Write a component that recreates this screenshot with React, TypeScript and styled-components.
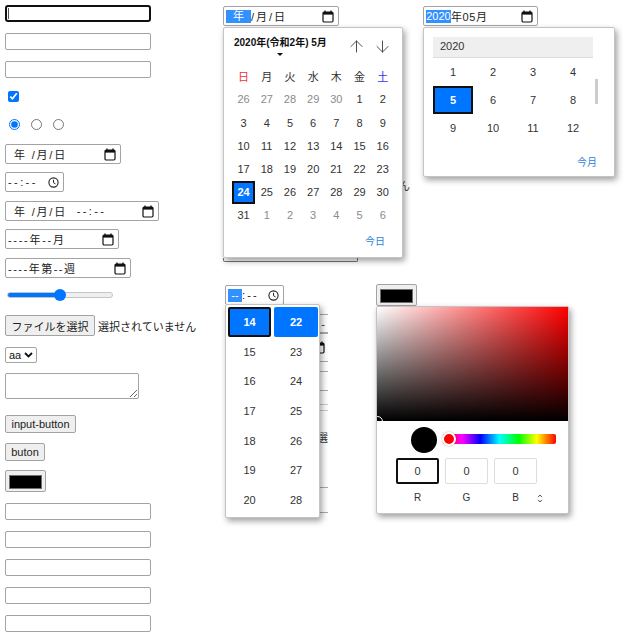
import React from "react";
import styled, { createGlobalStyle } from "styled-components";
import { ArrowUp, ArrowDown } from "lucide-react";

const FONT = `"Liberation Sans", "Noto Sans CJK JP", Arial, sans-serif`;
const BORDER = "#a3a3a3";
const BLUE = "#0075ff";
const INK = "#101010";

const Global = createGlobalStyle`
  html, body { margin: 0; padding: 0; background: #fff; overflow: hidden; }
  body { font-family: ${FONT}; font-size: 11px; color: #222; }
  * { box-sizing: border-box; }
`;

const Page = styled.div`
  display: flex;
  width: 628px;
  height: 640px;
  overflow: hidden;
`;

const FormColumn = styled.div`
  width: 223px;
  flex: none;
  padding: 5px 0 0 5px;
  display: flex;
  flex-direction: column;
  align-items: flex-start;
`;

const Spaced = styled.div<{ $top?: number; $left?: number }>`
  margin-top: ${(p) => p.$top ?? 0}px;
  margin-left: ${(p) => p.$left ?? 0}px;
`;

const TextInput = styled.input.attrs({ type: "text" })<{ $top?: number }>`
  display: block;
  flex: none;
  width: 146px;
  height: 17px;
  margin: ${(p) => p.$top ?? 0}px 0 0;
  padding: 0 2px;
  border: 1px solid ${BORDER};
  border-radius: 2px;
  background: #fff;
  font: 11px ${FONT};
  outline: none;
`;

const FocusWrap = styled.div`
  position: relative;
  width: 146px;
  height: 17px;
  flex: none;
  border: 2px solid ${INK};
  border-radius: 3px;
  &::after {
    content: "";
    position: absolute;
    left: 1px;
    top: 1px;
    bottom: 1px;
    width: 1px;
    background: #555;
  }
`;

const Checkbox = styled.input.attrs({ type: "checkbox" })`
  display: block;
  width: 11px;
  height: 11px;
  margin: 0;
  accent-color: ${BLUE};
`;

const RadioRow = styled.div`
  display: flex;
  gap: 11px;
  margin: 17px 0 0 4px;
`;

const Radio = styled.input.attrs({ type: "radio" })`
  display: block;
  width: 11px;
  height: 11px;
  margin: 0;
  accent-color: ${BLUE};
`;

const PickerField = styled.div<{ $width: number; $top?: number }>`
  flex: none;
  display: flex;
  align-items: center;
  justify-content: space-between;
  width: ${(p) => p.$width}px;
  height: 20px;
  margin-top: ${(p) => p.$top ?? 0}px;
  padding: 0 4px 0 2px;
  border: 1px solid ${BORDER};
  border-radius: 2px;
  background: #fff;
  font-size: 11px;
  color: #222;
  white-space: nowrap;
`;

const FieldText = styled.span<{ $indent?: number; $track?: number }>`
  display: inline-flex;
  align-items: center;
  white-space: pre;
  padding-left: ${(p) => p.$indent ?? 0}px;
  letter-spacing: ${(p) => p.$track ?? 0}px;
`;

const Selected = styled.span<{ $width: number }>`
  display: inline-block;
  width: ${(p) => p.$width}px;
  height: 13px;
  line-height: 13px;
  text-align: center;
  letter-spacing: 0;
  background: #3390ff;
  color: #fff;
`;

const RangeInput = styled.input.attrs({ type: "range", min: 0, max: 100, defaultValue: 50 })`
  display: block;
  width: 106px;
  height: 12px;
  margin: 11px 0 0 2px;
  padding: 0;
  appearance: none;
  background: transparent;
  &::-webkit-slider-runnable-track {
    height: 6px;
    border-radius: 3px;
    border: 1px solid #c4c4c4;
    background: linear-gradient(to right, ${BLUE} 50%, #efefef 50%);
  }
  &::-webkit-slider-thumb {
    appearance: none;
    width: 12px;
    height: 12px;
    margin-top: -4px;
    border-radius: 50%;
    background: ${BLUE};
    border: none;
  }
`;

const FileRow = styled.div`
  display: flex;
  align-items: center;
  gap: 3px;
  margin-top: 14px;
  font-size: 11px;
  white-space: nowrap;
`;

const Button = styled.button<{ $width: number; $height?: number; $top?: number }>`
  display: block;
  flex: none;
  width: ${(p) => p.$width}px;
  height: ${(p) => p.$height ?? 18}px;
  margin: ${(p) => p.$top ?? 0}px 0 0;
  padding: 0;
  border: 1px solid ${BORDER};
  border-radius: 2px;
  background: #efefef;
  font: 11px ${FONT};
  color: #222;
  white-space: nowrap;
`;

const chevron = encodeURIComponent(
  `<svg xmlns="http://www.w3.org/2000/svg" width="9" height="6" viewBox="0 0 9 6"><path d="M1 1l3.5 3.5L8 1" fill="none" stroke="#111" stroke-width="1.8"/></svg>`
);

const Select = styled.select`
  display: block;
  width: 32px;
  height: 16px;
  margin-top: 11px;
  padding: 0 0 0 3px;
  appearance: none;
  font: 11px ${FONT};
  border: 1px solid ${BORDER};
  border-radius: 2px;
  background: #fff url("data:image/svg+xml,${chevron}") no-repeat right 3px center;
  color: #111;
`;

const TextArea = styled.textarea`
  display: block;
  width: 134px;
  height: 26px;
  margin: 10px 0 0;
  padding: 2px;
  border: 1px solid ${BORDER};
  border-radius: 2px;
  font: 11px ${FONT};
`;

const ColorSwatch = styled.button<{ $top?: number }>`
  display: block;
  flex: none;
  width: 41px;
  height: 22px;
  margin: ${(p) => p.$top ?? 0}px 0 0;
  padding: 4px 3px;
  border: 1px solid ${BORDER};
  border-radius: 2px;
  background: #efefef;
  &::before {
    content: "";
    display: block;
    height: 100%;
    background: #000;
    border: 1px solid #6f6f6f;
  }
`;

const Workspace = styled.div`
  flex: 1;
  min-width: 0;
  display: flex;
  flex-direction: column;
`;

const TopDemos = styled.div`
  display: flex;
  height: 262px;
  padding-top: 6px;
`;

const BottomDemos = styled.div`
  display: flex;
  margin: 22px 0 0 2px;
`;

const DateDemo = styled.div`
  position: relative;
  width: 200px;
  flex: none;
  display: flex;
  flex-direction: column;
`;

const StrayGlyph = styled.span`
  margin: 154px 0 0 176px;
  height: 12px;
  line-height: 12px;
  font-size: 11px;
  color: #444;
`;

const TextareaEdge = styled.div`
  width: 135px;
  height: 4px;
  margin-top: 66px;
  border: 1px solid #777;
  border-top: none;
  border-radius: 0 0 2px 2px;
`;

const MonthDemo = styled.div`
  position: relative;
  flex: 1;
`;

const TimeDemo = styled.div`
  position: relative;
  width: 151px;
  flex: none;
  padding-top: 1px;
`;

const ColorDemo = styled.div`
  position: relative;
  flex: 1;
`;

const ClippedForm = styled.div`
  width: 103px;
  overflow: hidden;
  display: flex;
  flex-direction: column;
  align-items: flex-end;
`;

const ClippedRow = styled.div<{ $top: number; $height: number; $light?: boolean }>`
  width: 103px;
  flex: none;
  height: ${(p) => p.$height}px;
  margin-top: ${(p) => p.$top}px;
  padding-right: 3px;
  display: flex;
  align-items: center;
  justify-content: flex-end;
  border-top: 1px solid ${(p) => (p.$light ? "#ccc" : "#aaa")};
  border-bottom: 1px solid ${(p) => (p.$light ? "#ccc" : "#aaa")};
  font-size: 11px;
  color: #333;
  white-space: nowrap;
`;

const ClippedText = styled.div`
  flex: none;
  width: 103px;
  height: 12px;
  margin-top: 21px;
  padding-left: 92px;
  line-height: 12px;
  font-size: 11px;
  color: #333;
  white-space: nowrap;
`;

const Popup = styled.div<{ $left: number; $top: number; $width: number; $height: number }>`
  position: absolute;
  z-index: 2;
  left: ${(p) => p.$left}px;
  top: ${(p) => p.$top}px;
  width: ${(p) => p.$width}px;
  height: ${(p) => p.$height}px;
  background: #fff;
  border: 1px solid #c4c4c4;
  border-radius: 2px;
  box-shadow: 2px 3px 6px rgba(0, 0, 0, 0.38);
`;

const CalendarBody = styled.div`
  height: 100%;
  padding: 0 8px;
  display: flex;
  flex-direction: column;
`;

const CalendarHead = styled.div`
  height: 36.6px;
  flex: none;
  display: flex;
  justify-content: space-between;
`;

const MonthTitle = styled.div`
  margin: 8px 0 0 2px;
  display: flex;
  flex-direction: column;
  align-items: center;
  font-size: 10px;
  font-weight: 700;
  line-height: 13px;
  color: #111;
  white-space: nowrap;
`;

const Caret = styled.span`
  margin-top: 4px;
  width: 0;
  height: 0;
  border-left: 3px solid transparent;
  border-right: 3px solid transparent;
  border-top: 3px solid #111;
`;

const ArrowPair = styled.div`
  display: flex;
  gap: 2px;
  padding-top: 8px;
  color: #444;
`;

const ArrowCell = styled.span`
  width: 24px;
  height: 20px;
  display: flex;
  align-items: center;
  justify-content: center;
`;

const DayGrid = styled.div`
  display: grid;
  grid-template-columns: repeat(7, 23.2px);
  grid-auto-rows: 23.2px;
`;

const Cell = styled.div<{ $color?: string; $selected?: boolean }>`
  display: flex;
  align-items: center;
  justify-content: center;
  font-size: 11px;
  color: ${(p) => (p.$selected ? "#fff" : p.$color ?? "#333")};
  font-weight: ${(p) => (p.$selected ? 700 : 400)};
  background: ${(p) => (p.$selected ? BLUE : "transparent")};
  border: ${(p) => (p.$selected ? `2px solid ${INK}` : "none")};
`;

const FooterLink = styled.div<{ $top: number; $right: number }>`
  margin-top: ${(p) => p.$top}px;
  padding-right: ${(p) => p.$right}px;
  text-align: right;
  font-size: 10px;
  line-height: 14px;
  color: #2a82d8;
`;

const MonthBody = styled.div`
  padding: 9px 9px 0;
`;

const YearBand = styled.div`
  width: 160px;
  height: 21px;
  padding-left: 7px;
  line-height: 19px;
  font-size: 11px;
  color: #333;
  background: #efefef;
  border-bottom: 1px solid #ddd;
`;

const MonthGrid = styled.div`
  display: grid;
  grid-template-columns: repeat(4, 40px);
  grid-auto-rows: 28px;
`;

const ScrollThumb = styled.span`
  position: absolute;
  left: 171px;
  top: 51px;
  width: 3px;
  height: 25px;
  background: #ccc;
`;

const TimeBody = styled.div`
  display: grid;
  grid-template-columns: 43px 44px;
  grid-auto-rows: 29.7px;
  column-gap: 3px;
  padding: 2px;
`;

const TimeCell = styled.div<{ $mode?: "focus" | "on" }>`
  display: flex;
  align-items: center;
  justify-content: center;
  font-size: 11px;
  border-radius: 2px;
  color: ${(p) => (p.$mode ? "#fff" : "#333")};
  font-weight: ${(p) => (p.$mode ? 700 : 400)};
  background: ${(p) => (p.$mode ? BLUE : "transparent")};
  border: ${(p) => (p.$mode === "focus" ? `2px solid ${INK}` : "none")};
`;

const Gradient = styled.div`
  position: relative;
  height: 114px;
  overflow: hidden;
  background: linear-gradient(to top, #000, transparent), linear-gradient(to right, #fff, #f00);
`;

const GradientHandle = styled.span`
  position: absolute;
  left: -5px;
  bottom: -6px;
  width: 11px;
  height: 11px;
  border: 1.5px solid #fff;
  border-radius: 50%;
`;

const HueRow = styled.div`
  display: flex;
  align-items: center;
  gap: 6px;
  padding: 6px 0 0 34px;
`;

const ColorDot = styled.span`
  width: 26px;
  height: 26px;
  border-radius: 50%;
  background: #000;
`;

const HueBar = styled.div`
  position: relative;
  width: 113px;
  height: 10px;
  margin-bottom: 2px;
  border-radius: 2px;
  background: linear-gradient(to right, #f00, #f0f 17%, #00f 33%, #0ff 50%, #0f0 67%, #ff0 83%, #f00);
`;

const HueThumb = styled.span`
  position: absolute;
  left: -1px;
  top: -2px;
  width: 14px;
  height: 14px;
  border: 2px solid #fff;
  border-radius: 50%;
  background: #f00;
  box-shadow: 0 0 2px rgba(0, 0, 0, 0.35);
`;

const ChannelRow = styled.div`
  display: grid;
  grid-template-columns: repeat(3, 43px) 20px;
  column-gap: 6px;
  padding-left: 19px;
  margin-top: 5px;
`;

const ChannelInput = styled.input.attrs({ type: "text", readOnly: true })<{ $focus?: boolean }>`
  width: 43px;
  height: 26px;
  padding: 0;
  text-align: center;
  font: 11px ${FONT};
  color: #333;
  outline: none;
  border-radius: 2px;
  border: ${(p) => (p.$focus ? `2px solid ${INK}` : "1px solid #ddd")};
  background: #fff;
`;

const ChannelLabels = styled(ChannelRow)`
  margin-top: 7px;
  font-size: 10px;
  line-height: 14px;
  color: #333;
  text-align: center;
`;

const Icon = styled.svg`
  flex: none;
  display: block;
`;

const UpDownSvg = styled.svg`
  display: block;
  margin: 3px 0 0 -6px;
`;

const CalendarIcon = () => (
  <Icon width="12" height="13" viewBox="0 0 12 13" fill="none">
    <path d="M3 0.5v2M9 0.5v2" stroke="#111" strokeWidth="1.3" />
    <rect x="1" y="2" width="10" height="10" rx="1.2" stroke="#111" strokeWidth="1.2" />
    <rect x="1" y="2" width="10" height="2.6" fill="#111" />
  </Icon>
);

const ClockIcon = () => (
  <Icon width="11" height="11" viewBox="0 0 11 11" fill="none">
    <circle cx="5.5" cy="5.5" r="4.6" stroke="#222" strokeWidth="1.1" />
    <path d="M5.5 2.8v2.9l2 1.2" stroke="#222" strokeWidth="1" />
  </Icon>
);

const UpDownIcon = () => (
  <UpDownSvg width="6" height="9" viewBox="0 0 6 9" fill="none">
    <path d="M1 3.2 3 1l2 2.2M1 5.8 3 8l2-2.2" stroke="#444" strokeWidth="0.9" />
  </UpDownSvg>
);

const weekHead: [string, string?][] = [
  ["日", "#f03030"], ["月"], ["火"], ["水"], ["木"], ["金"], ["土", "#3333ee"],
];
const muted = "#8a8a8a";
const dayRows: [number, boolean][] = [
  ...[26, 27, 28, 29, 30].map((d): [number, boolean] => [d, true]),
  ...Array.from({ length: 31 }, (_, i): [number, boolean] => [i + 1, false]),
  ...[1, 2, 3, 4, 5, 6].map((d): [number, boolean] => [d, true]),
];
const months = Array.from({ length: 12 }, (_, i) => i + 1);

const App = () => (
  <Page>
    <Global />
    <FormColumn>
      <FocusWrap />
      <TextInput $top={11} />
      <TextInput $top={11} />
      <Spaced $top={13} $left={3}>
        <Checkbox defaultChecked />
      </Spaced>
      <RadioRow>
        <Radio name="r" defaultChecked />
        <Radio name="r" />
        <Radio name="r" />
      </RadioRow>
      <PickerField $width={116} $top={14}>
        <FieldText $indent={6} $track={1.8}>年 /月/日</FieldText>
        <CalendarIcon />
      </PickerField>
      <PickerField $width={59} $top={8}>
        <FieldText $track={2.4}>--:--</FieldText>
        <ClockIcon />
      </PickerField>
      <PickerField $width={154} $top={9}>
        <FieldText $indent={6} $track={1.8}>
          年 /月/日  <FieldText $track={2.4}>--:--</FieldText>
        </FieldText>
        <CalendarIcon />
      </PickerField>
      <PickerField $width={114} $top={8}>
        <FieldText $track={1.7}>----年--月</FieldText>
        <CalendarIcon />
      </PickerField>
      <PickerField $width={126} $top={9}>
        <FieldText $track={1.5}>----年第--週</FieldText>
        <CalendarIcon />
      </PickerField>
      <RangeInput />
      <FileRow>
        <Button $width={90} $height={21}>ファイルを選択</Button>
        <span>選択されていません</span>
      </FileRow>
      <Select>
        <option>aa</option>
      </Select>
      <TextArea />
      <Button $width={71} $top={16}>input-button</Button>
      <Button $width={40} $top={10}>buton</Button>
      <ColorSwatch $top={9} />
      <TextInput $top={11} />
      <TextInput $top={11} />
      <TextInput $top={11} />
      <TextInput $top={11} />
      <TextInput $top={11} />
    </FormColumn>

    <Workspace>
      <TopDemos>
        <DateDemo>
          <PickerField $width={116}>
            <FieldText>
              <Selected $width={25}>年</Selected>
              <FieldText $track={2}>/月/日</FieldText>
            </FieldText>
            <CalendarIcon />
          </PickerField>
          <StrayGlyph>ん</StrayGlyph>
          <TextareaEdge />
          <Popup $left={0} $top={21} $width={180} $height={231}>
            <CalendarBody>
              <CalendarHead>
                <MonthTitle>
                  2020年(令和2年) 5月
                  <Caret />
                </MonthTitle>
                <ArrowPair>
                  <ArrowCell><ArrowUp size={19} strokeWidth={1.2} /></ArrowCell>
                  <ArrowCell><ArrowDown size={19} strokeWidth={1.2} /></ArrowCell>
                </ArrowPair>
              </CalendarHead>
              <DayGrid>
                {weekHead.map(([d, c]) => (
                  <Cell key={d} $color={c}>{d}</Cell>
                ))}
                {dayRows.map(([d, out], i) => (
                  <Cell key={i} $color={out ? muted : undefined} $selected={!out && d === 24}>
                    {d}
                  </Cell>
                ))}
              </DayGrid>
              <FooterLink $top={8} $right={9}>今日</FooterLink>
            </CalendarBody>
          </Popup>
        </DateDemo>
        <MonthDemo>
          <PickerField $width={115}>
            <FieldText>
              <Selected $width={25}>2020</Selected>
              <FieldText $track={0.6}>年05月</FieldText>
            </FieldText>
            <CalendarIcon />
          </PickerField>
          <Popup $left={0} $top={21} $width={192} $height={150}>
            <MonthBody>
              <YearBand>2020</YearBand>
              <MonthGrid>
                {months.map((m) => (
                  <Cell key={m} $selected={m === 5}>{m}</Cell>
                ))}
              </MonthGrid>
            </MonthBody>
            <ScrollThumb />
            <FooterLink $top={14} $right={17}>今月</FooterLink>
          </Popup>
        </MonthDemo>
      </TopDemos>

      <BottomDemos>
        <TimeDemo>
          <PickerField $width={59}>
            <FieldText>
              <Selected $width={14}>--</Selected>
              <FieldText $track={2.2}>:--</FieldText>
            </FieldText>
            <ClockIcon />
          </PickerField>
          <ClippedForm>
            <ClippedRow $top={9} $height={19}>-</ClippedRow>
            <ClippedRow $top={0} $height={29}><CalendarIcon /></ClippedRow>
            <ClippedRow $top={9} $height={20} />
            <ClippedRow $top={13} $height={7} $light />
            <ClippedText>選</ClippedText>
            <ClippedRow $top={43} $height={26} />
          </ClippedForm>
          <Popup $left={0} $top={20} $width={95} $height={214}>
            <TimeBody>
              <TimeCell $mode="focus">14</TimeCell>
              <TimeCell $mode="on">22</TimeCell>
              {[15, 16, 17, 18, 19, 20].map((h, i) => (
                <React.Fragment key={h}>
                  <TimeCell>{h}</TimeCell>
                  <TimeCell>{23 + i}</TimeCell>
                </React.Fragment>
              ))}
            </TimeBody>
          </Popup>
        </TimeDemo>
        <ColorDemo>
          <ColorSwatch />
          <Popup $left={0} $top={22} $width={193} $height={208}>
            <Gradient>
              <GradientHandle />
            </Gradient>
            <HueRow>
              <ColorDot />
              <HueBar>
                <HueThumb />
              </HueBar>
            </HueRow>
            <ChannelRow>
              <ChannelInput $focus value="0" />
              <ChannelInput value="0" />
              <ChannelInput value="0" />
            </ChannelRow>
            <ChannelLabels>
              <span>R</span>
              <span>G</span>
              <span>B</span>
              <UpDownIcon />
            </ChannelLabels>
          </Popup>
        </ColorDemo>
      </BottomDemos>
    </Workspace>
  </Page>
);

export default App;
